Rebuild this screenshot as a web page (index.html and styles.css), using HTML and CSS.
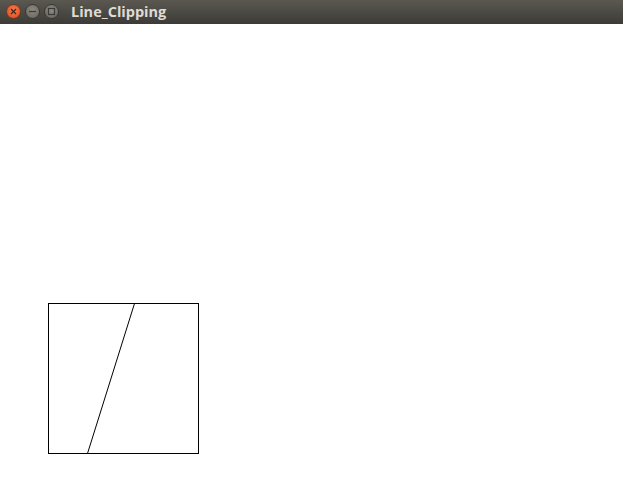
FILE: index.html
```html
<!DOCTYPE html>
<html>
<head>
<meta charset="utf-8">
<link rel="stylesheet" href="styles.css">
</head>
<body>
<div class="titlebar">
  <div class="buttons">
    <span class="btn close"><svg width="15" height="15" viewBox="0 0 15 15"><path d="M5 5 L10 10 M10 5 L5 10" stroke="#3a2a22" stroke-width="1.3"/></svg></span>
    <span class="btn"><svg width="15" height="15" viewBox="0 0 15 15"><path d="M4 7.5 H11" stroke="#3c3a36" stroke-width="1.3"/></svg></span>
    <span class="btn"><svg width="15" height="15" viewBox="0 0 15 15"><rect x="4.5" y="4.5" width="6" height="6" fill="none" stroke="#3c3a36" stroke-width="1.2"/></svg></span>
  </div>
  <div class="title">Line_Clipping</div>
</div>
<svg class="canvas" width="623" height="479" viewBox="0 0 623 479">
  <rect x="48.5" y="279.5" width="150" height="150" fill="none" stroke="#000" stroke-width="1"/>
  <line x1="134.5" y1="279.5" x2="87.5" y2="429.5" stroke="#000" stroke-width="1"/>
</svg>
</body>
</html>
```
FILE: styles.css
```css
html, body {
  margin: 0;
  padding: 0;
  background: #ffffff;
  overflow: hidden;
}
.titlebar {
  height: 24px;
  display: flex;
  align-items: center;
  background: linear-gradient(#5b5851, #3c3b37);
  font-family: "Open Sans", "DejaVu Sans", sans-serif;
}
.buttons {
  display: flex;
  gap: 4px;
  padding-left: 6px;
  align-items: center;
  margin-top: -1px;
}
.btn {
  width: 15px;
  height: 15px;
  box-sizing: border-box;
  border-radius: 50%;
  border: 1px solid #3a3834;
  background: radial-gradient(circle at 50% 40%, #8d8a83, #64625c);
  display: flex;
  align-items: center;
  justify-content: center;
}
.btn svg {
  flex: none;
  margin: -1px;
}
.btn.close {
  background: radial-gradient(circle at 50% 40%, #f57c4c, #dc4a1d);
  border-color: #6a3a26;
}
.title {
  margin-left: 12px;
  color: #dfdbd2;
  font-weight: bold;
  font-size: 14.5px;
  line-height: 24px;
}
.canvas {
  display: block;
}
```
